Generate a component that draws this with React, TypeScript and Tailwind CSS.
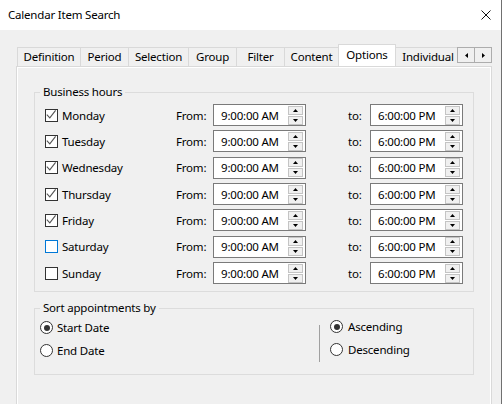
import React from 'react';

const days: { name: string; checked: boolean; focus?: boolean }[] = [
  { name: 'Monday', checked: true },
  { name: 'Tuesday', checked: true },
  { name: 'Wednesday', checked: true },
  { name: 'Thursday', checked: true },
  { name: 'Friday', checked: true },
  { name: 'Saturday', checked: false, focus: true },
  { name: 'Sunday', checked: false },
];

const tabs: { label: string; w: string }[] = [
  { label: 'Definition', w: 'w-[63px]' },
  { label: 'Period', w: 'w-[48px]' },
  { label: 'Selection', w: 'w-[60px]' },
  { label: 'Group', w: 'w-[48px]' },
  { label: 'Filter', w: 'w-[48px]' },
  { label: 'Content', w: 'w-[54px]' },
  { label: 'Options', w: 'w-[58px]' },
  { label: 'Individual', w: 'w-[64px]' },
];

const Checkbox = ({ checked, focus }: { checked: boolean; focus?: boolean }) => (
  <div
    className={`flex h-[13px] w-[13px] shrink-0 items-center justify-center border bg-white ${
      focus ? 'border-[#0078d7]' : 'border-[#333333]'
    }`}
  >
    {checked && (
      <svg width="11" height="11" viewBox="0 0 11 11">
        <polyline points="0.8,4.6 3.8,7.8 9.6,0.4" fill="none" stroke="#555" strokeWidth="1.1" />
      </svg>
    )}
  </div>
);

const Radio = ({ checked }: { checked: boolean }) => (
  <div className="flex h-[13px] w-[13px] shrink-0 items-center justify-center rounded-full border border-[#333333] bg-white">
    {checked && <div className="h-[6px] w-[6px] rounded-full bg-[#333333]" />}
  </div>
);

const Spinner = () => (
  <div className="flex w-[15px] flex-col gap-px">
    <div className="flex h-[9px] items-center justify-center border border-[#c4c4c4] bg-[#f0f0f0]">
      <svg width="5" height="3" viewBox="0 0 5 3"><polygon points="0,3 5,3 2.5,0" fill="#000" /></svg>
    </div>
    <div className="flex h-[9px] items-center justify-center border border-[#c4c4c4] bg-[#f0f0f0]">
      <svg width="5" height="3" viewBox="0 0 5 3"><polygon points="0,0 5,0 2.5,3" fill="#000" /></svg>
    </div>
  </div>
);

const TimeBox = ({ value }: { value: string }) => (
  <div className="flex h-[22px] w-[93px] shrink-0 items-center border border-[#7a7a7a] bg-white pl-[7px] pr-[2px]">
    <span className="flex-1 whitespace-nowrap">{value}</span>
    <Spinner />
  </div>
);

export default function App() {
  return (
    <div className="flex h-[404px] w-[502px] flex-col overflow-hidden border-r border-[#707070] font-['Noto_Sans',sans-serif] text-[11.5px] tracking-[-0.2px] text-black">
      {/* title bar */}
      <div className="flex h-[30px] shrink-0 items-center justify-between bg-white pl-[8px] pr-[10px]">
        <span>Calendar Item Search</span>
        <svg width="10" height="10" viewBox="0 0 10 10">
          <path d="M0.5 0.5 L9.5 9.5 M9.5 0.5 L0.5 9.5" stroke="#111" strokeWidth="1" />
        </svg>
      </div>

      <div className="flex-1 bg-[#f0f0f0] pl-[16px] pt-[14px]">
        {/* tab strip */}
        <div className="flex h-[22px] w-[476px] items-end pl-px">
          <div className="flex h-[22px] w-[440px] items-end overflow-hidden">
            {tabs.map((t, i) => {
              const selected = t.label === 'Options';
              const afterSelected = i > 0 && tabs[i - 1].label === 'Options';
              return (
                <div
                  key={t.label}
                  className={`${t.w} flex shrink-0 items-center justify-center whitespace-nowrap border-t border-[#d9d9d9] ${
                    afterSelected ? '' : 'border-l'
                  } ${
                    selected
                      ? 'relative z-10 -mb-px h-[23px] border-r bg-white pb-[2px]'
                      : 'h-[19px] bg-[#f0f0f0]'
                  }`}
                >
                  {t.label}
                </div>
              );
            })}
          </div>
          <div className="mb-[3px] flex h-[16px] w-[35px] self-end">
            <div className="flex flex-1 items-center justify-center border border-[#adadad] bg-[#f0f0f0]">
              <svg width="3" height="5" viewBox="0 0 3 5"><polygon points="3,0 3,5 0,2.5" fill="#000" /></svg>
            </div>
            <div className="flex flex-1 items-center justify-center border border-l-0 border-[#adadad] bg-[#f0f0f0]">
              <svg width="3" height="5" viewBox="0 0 3 5"><polygon points="0,0 0,5 3,2.5" fill="#000" /></svg>
            </div>
          </div>
        </div>

        {/* panel */}
        <div className="h-[400px] w-[476px] border border-[#d9d9d9] bg-[#f0f0f0] shadow-[inset_1px_1px_0_#ffffff,inset_-1px_0_0_#ffffff]">
          <fieldset className="ml-[17px] mt-[17px] w-[440px] border border-[#dcdcdc] p-0">
            <legend className="ml-[5px] px-[3px] leading-[16px]">Business hours</legend>
            <div className="flex flex-col pb-[5px] pl-[10px] pt-[2px]">
              {days.map((d) => (
                <div key={d.name} className="flex h-[26.33px] items-center">
                  <div className="flex w-[131px] items-center gap-[4px]">
                    <Checkbox checked={d.checked} focus={d.focus} />
                    <span>{d.name}</span>
                  </div>
                  <span className="w-[37px]">From:</span>
                  <TimeBox value="9:00:00 AM" />
                  <div className="w-[42px]" />
                  <span className="w-[22px]">to:</span>
                  <TimeBox value="6:00:00 PM" />
                </div>
              ))}
            </div>
          </fieldset>

          <fieldset className="ml-[17px] mt-[8px] w-[440px] border border-[#dcdcdc] p-0">
            <legend className="ml-[5px] px-[3px] leading-[16px]">Sort appointments by</legend>
            <div className="flex pb-[12px] pl-[5px]">
              <div className="flex w-[279px] flex-col">
                <label className="flex h-[23px] items-center gap-[4px]">
                  <Radio checked />
                  <span>Start Date</span>
                </label>
                <label className="flex h-[23px] items-center gap-[4px]">
                  <Radio checked={false} />
                  <span>End Date</span>
                </label>
              </div>
              <div className="flex">
                <div className="mt-[9px] h-[37px] w-px bg-[#a0a0a0]" />
                <div className="-mt-px ml-[10px] flex flex-col">
                  <label className="flex h-[23px] items-center gap-[5px]">
                    <Radio checked />
                    <span>Ascending</span>
                  </label>
                  <label className="flex h-[23px] items-center gap-[5px]">
                    <Radio checked={false} />
                    <span>Descending</span>
                  </label>
                </div>
              </div>
            </div>
          </fieldset>
        </div>
      </div>
    </div>
  );
}
